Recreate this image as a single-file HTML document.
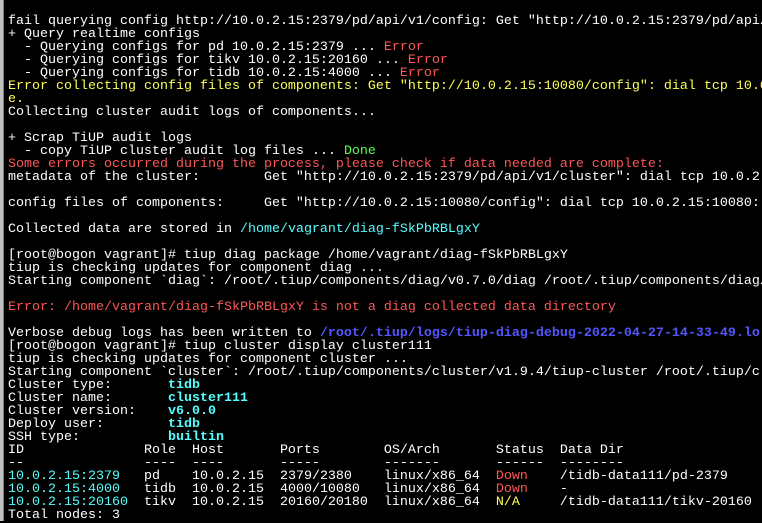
<!DOCTYPE html>
<html><head><meta charset="utf-8"><style>
html,body{margin:0;padding:0;background:#000;width:762px;height:521px;overflow:hidden}
.b{position:absolute;left:0;top:0;width:3px;height:521px;background:#c0c0c0}
.b2{position:absolute;left:3px;top:0;width:1px;height:521px;background:#808080}
pre{position:absolute;left:8px;top:15px;margin:0;font-family:"Liberation Mono",monospace;font-size:13.33px;line-height:13px;color:#fff;white-space:pre}
.r{color:#ff5555}.y{color:#ffff55}.g{color:#55ff55}.c{color:#55ffff}.u{color:#5555ff;font-weight:bold}.cb{color:#55ffff;font-weight:bold}
</style></head><body><div class="b"></div><div class="b2"></div>
<pre>fail querying config http://10.0.2.15:2379/pd/api/v1/config: Get "http://10.0.2.15:2379/pd/api/
+ Query realtime configs
  - Querying configs for pd 10.0.2.15:2379 ... <span class="r">Error</span>
  - Querying configs for tikv 10.0.2.15:20160 ... <span class="r">Error</span>
  - Querying configs for tidb 10.0.2.15:4000 ... <span class="r">Error</span>
<span class="y">Error collecting config files of components: Get "http://10.0.2.15:10080/config": dial tcp 10.0.</span>
<span class="y">e.</span>
Collecting cluster audit logs of components...

+ Scrap TiUP audit logs
  - copy TiUP cluster audit log files ... <span class="g">Done</span>
<span class="r">Some errors occurred during the process, please check if data needed are complete:</span>
metadata of the cluster:        Get "http://10.0.2.15:2379/pd/api/v1/cluster": dial tcp 10.0.2

config files of components:     Get "http://10.0.2.15:10080/config": dial tcp 10.0.2.15:10080:

Collected data are stored in <span class="c">/home/vagrant/diag-fSkPbRBLgxY</span>

[root@bogon vagrant]# tiup diag package /home/vagrant/diag-fSkPbRBLgxY
tiup is checking updates for component diag ...
Starting component `diag`: /root/.tiup/components/diag/v0.7.0/diag /root/.tiup/components/diag/

<span class="r">Error: /home/vagrant/diag-fSkPbRBLgxY is not a diag collected data directory</span>

Verbose debug logs has been written to <span class="u">/root/.tiup/logs/tiup-diag-debug-2022-04-27-14-33-49.lo</span>
[root@bogon vagrant]# tiup cluster display cluster111
tiup is checking updates for component cluster ...
Starting component `cluster`: /root/.tiup/components/cluster/v1.9.4/tiup-cluster /root/.tiup/c
Cluster type:       <span class="cb">tidb</span>
Cluster name:       <span class="cb">cluster111</span>
Cluster version:    <span class="cb">v6.0.0</span>
Deploy user:        <span class="cb">tidb</span>
SSH type:           <span class="cb">builtin</span>
ID               Role  Host       Ports        OS/Arch       Status  Data Dir
--               ----  ----       -----        -------       ------  --------
<span class="c">10.0.2.15:2379</span>   pd    10.0.2.15  2379/2380    linux/x86_64  <span class="r">Down</span>    /tidb-data111/pd-2379
<span class="c">10.0.2.15:4000</span>   tidb  10.0.2.15  4000/10080   linux/x86_64  <span class="r">Down</span>    -
<span class="c">10.0.2.15:20160</span>  tikv  10.0.2.15  20160/20180  linux/x86_64  <span class="y">N/A</span>     /tidb-data111/tikv-20160
Total nodes: 3</pre>
</body></html>
